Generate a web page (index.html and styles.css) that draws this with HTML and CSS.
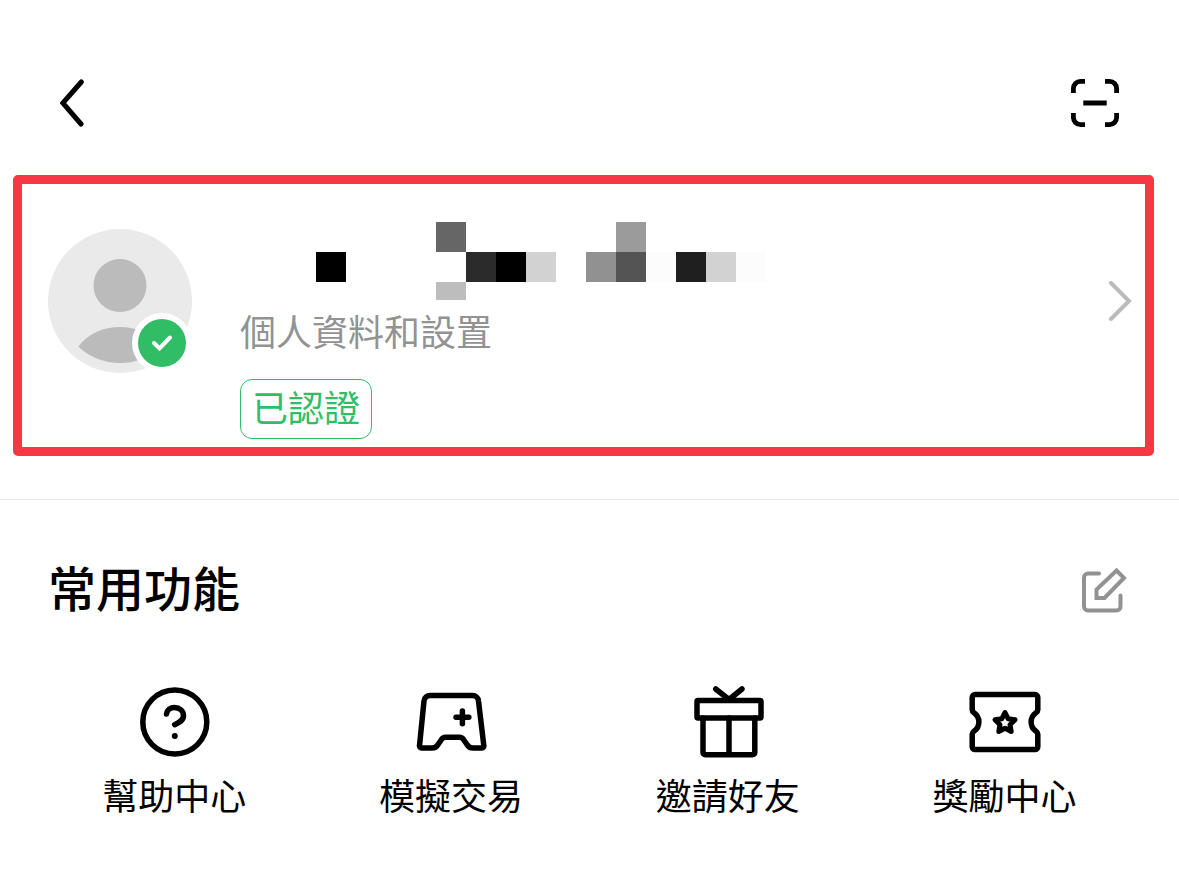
FILE: index.html
```html
<!DOCTYPE html>
<html lang="zh-Hant">
	<head>
		<meta charset="utf-8">
		<meta name="viewport" content="width=device-width, initial-scale=1">
		<title>個人中心</title>
		<link rel="stylesheet" href="styles.css">
	</head>
	<body>
		<header class="topbar">
			<button type="button" class="icon-btn" aria-label="返回">
				<svg width="24" height="48" viewBox="0 0 24 48" fill="none" stroke="#000" stroke-width="5" stroke-linecap="round">
					<path d="M21.3 3 2.8 24 21 45" />
				</svg>
			</button>
			<button type="button" class="icon-btn" aria-label="掃描">
				<svg width="48" height="48" viewBox="0 0 48 48" fill="none" stroke="#000" stroke-width="4.8">
					<path d="M2.4 14V9.4a7 7 0 0 1 7-7H14M34 2.4h4.6a7 7 0 0 1 7 7V14M45.6 34v4.600a7 7 0 0 1-7 7H34M14 45.6H9.4a7 7 0 0 1-7-7V34M12.3 24h23.4" />
				</svg>
			</button>
		</header>
		<main>
			<a href="#profile" class="profile" aria-label="個人資料和設置">
				<svg class="avatar" width="144" height="144" viewBox="0 0 144 144">
					<circle cx="72" cy="72" r="72" fill="#eaeaea" />
					<circle cx="72" cy="56.5" r="26.5" fill="#bbb" />
					<path d="M30.3 117.5C40 105 55 98 72 98s32 7 41.7 19.5C103 128 88 134 72 134s-31-6-41.7-16.5Z" fill="#bbb" />
					<circle cx="114" cy="114" r="30" fill="#fff" />
					<circle cx="114" cy="114" r="24" fill="#31bd65" />
					<path d="m106 114 5.5 5.500L122 108.500" fill="none" stroke="#fff" stroke-width="4" stroke-linecap="round" />
				</svg>
				<div class="info">
					<!-- 打碼的暱稱 -->
					<svg class="name" width="526" height="78" viewBox="0 0 526 78" shape-rendering="crispEdges">
						<path d="M76 30h30v30H76zM256 30h30v30h-30z" fill="#000" />
						<path d="M196 0h30v30h-30z" fill="#666" />
						<path d="M196 60h30v18h-30z" fill="#bdbdbd" />
						<path d="M226 30h30v30h-30z" fill="#2b2b2b" />
						<path d="M286 30h30v30h-30zM466 30h30v30h-30z" fill="#d2d2d2" />
						<path d="M346 30h30v30h-30z" fill="#919191" />
						<path d="M376 0h30v30h-30z" fill="#9b9b9b" />
						<path d="M376 30h30v30h-30z" fill="#545454" />
						<path d="M406 30h30v30h-30zM496 30h30v30h-30z" fill="#fcfcfc" />
						<path d="M436 30h30v30h-30z" fill="#1f1f1f" />
					</svg>
					<p class="desc">個人資料和設置</p>
					<span class="tag">已認證</span>
				</div>
				<svg class="arrow" width="24" height="40" viewBox="0 0 24 40" fill="none" stroke="#bbb" stroke-width="4" stroke-linecap="round">
					<path d="m3 2 18 18L3 38" />
				</svg>
			</a>
			<section class="common">
				<div class="common-head">
					<h2>常用功能</h2>
					<button type="button" class="icon-btn" aria-label="編輯">
						<svg width="46" height="46" viewBox="0 0 46 46" fill="none" stroke="#929292" stroke-width="4" stroke-linecap="round">
							<path d="M17 6.5H6a4 4 0 0 0-4 4v29a4 4 0 0 0 4 4h28.500a4 4 0 0 0 4-4V28.500" />
							<path d="m34.500 3.500 7.500 7.500L22.500 31h-8v-8.500Z" />
						</svg>
					</button>
				</div>
				<nav class="menu">
					<a href="#help">
						<svg width="72" height="72" viewBox="0 0 72 72" fill="none" stroke="#000" stroke-width="5.5" stroke-linecap="round">
							<circle cx="36.8" cy="36" r="32" />
							<path d="M28.500 28C29 24 32.500 21.500 36.500 21.500c5 0 9 3.500 9 8 0 5-4 7-8.800 9.200" />
							<circle cx="36.8" cy="50" r="3" fill="#000" stroke="none" />
						</svg>
						<span>幫助中心</span>
					</a>
					<a href="#demo">
						<svg width="72" height="72" viewBox="0 0 72 72" fill="none" stroke="#000" stroke-width="5.5" stroke-linecap="round" stroke-linejoin="round">
							<path d="M15.500 9.500h42a6 6 0 0 1 6 5.500l5.300 44.500a2 2 0 0 1-2 2.500H58c-3 0-4.500-1-6-3.500l-3.500-5c-1-1.700-2-2.300-4-2.300H30.500c-2 0-3 .6-4 2.300L23 58.500C21.500 61 20 62 17 62H6.500a2 2 0 0 1-2-2.300L9 15a6 6 0 0 1 6.500-5.500Z" />
							<path d="M41 31.300h12.800M47.400 25v12.800" />
						</svg>
						<span>模擬交易</span>
					</a>
					<a href="#invite">
						<svg width="72" height="72" viewBox="0 0 72 72" fill="none" stroke="#000" stroke-width="5.5" stroke-linecap="round" stroke-linejoin="round">
							<rect x="5" y="14.500" width="64" height="17.500" rx="1" />
							<path d="M11 32v34.500a2.300 2.300 0 0 0 2.300 2.300h47.200a2.300 2.300 0 0 0 2.300-2.300V32M37 32v36.500M23.700 3 37 13.500 50 3" />
						</svg>
						<span>邀請好友</span>
					</a>
					<a href="#reward">
						<svg width="72" height="72" viewBox="0 0 72 72" fill="none" stroke="#000" stroke-width="5.5" stroke-linecap="round" stroke-linejoin="round">
							<path d="M6 8.500h60a2.800 2.800 0 0 1 2.800 2.800v12.500c0 1.500-.6 2.200-1.800 3-6.500 4.500-6.500 14 0 18.500 1.200.8 1.800 1.500 1.800 3v12.500a2.800 2.800 0 0 1-2.800 2.800H6a2.800 2.800 0 0 1-2.800-2.800V48.300c0-1.500.6-2.200 1.800-3 6.500-4.500 6.500-14 0-18.500-1.200-.8-1.800-1.500-1.800-3V11.300A2.800 2.800 0 0 1 6 8.500Z" />
							<path d="m36 26.500 3.100 6.200 6.900 1.100-5 4.900 1.200 6.800-6.200-3.200-6.200 3.200 1.200-6.800-5-4.900 6.900-1.100Z" stroke-width="5" />
						</svg>
						<span>獎勵中心</span>
					</a>
				</nav>
			</section>
		</main>
	</body>
</html>
```
FILE: styles.css
```css
*{margin: 0;padding: 0;box-sizing: border-box;}
body{background-color: #fff;color: #000;
	font-family: "Noto Sans CJK SC", "Noto Sans CJK TC", sans-serif;}
a{color: inherit;text-decoration: none;}
svg{display: block;flex: none;}
.icon-btn{border: none;background: none;cursor: pointer;}

/* 頂部 */
.topbar{display: flex;justify-content: space-between;padding: 79px 60px 48px;}

/* 個人資料 */
.profile{display: flex;align-items: flex-start;margin: 0 25px 43px 13px;
	padding: 38px 13px 8px 26px;border: 9px solid #f83744;border-radius: 5px;}
.avatar{margin-top: 7px;}
.info{flex: 1;margin-left: 48px;}
.name{max-width: 100%;}
.desc{margin-top: 10px;font-size: 36px;line-height: 40px;color: #929292;}
.tag{display: inline-block;margin-top: 29px;padding: 0 11px 6px;border: 1px solid #31bd65;
	border-radius: 12px;font-size: 36px;line-height: 52px;color: #31bd65;vertical-align: top;}
.arrow{margin-top: 59px;}

/* 常用功能 */
.common{padding: 62px 36px 48px;border-top: 1px solid #e8e8e8;}
.common-head{display: flex;justify-content: space-between;align-items: center;
	padding: 0 15px 0 12px;}
.common-head h2{padding-bottom: 8px;font-size: 48px;font-weight: 500;line-height: 48px;}
.menu{display: grid;grid-template-columns: repeat(4, 1fr);margin-top: 68px;}
.menu a{display: flex;flex-direction: column;align-items: center;gap: 14px;
	font-size: 36px;line-height: 44px;}
```
